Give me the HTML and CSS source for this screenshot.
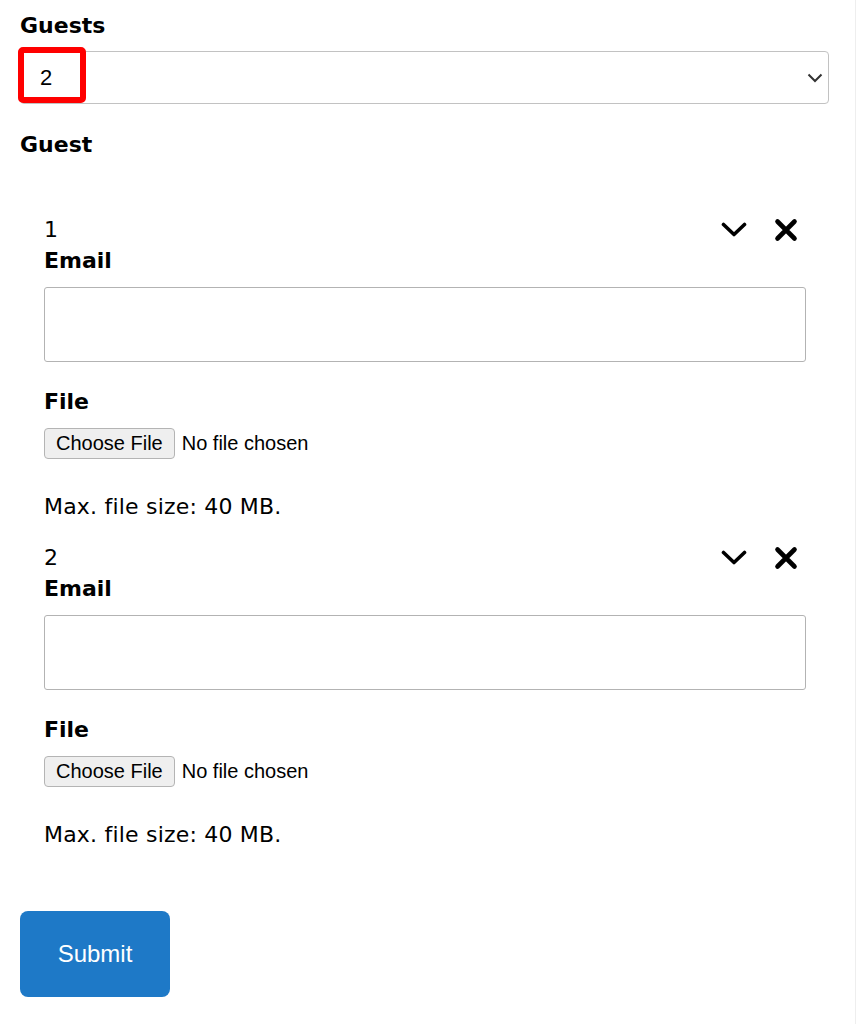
FILE: index.html
```html
<!DOCTYPE html>
<html>
  <head>
    <title>Guests</title>
    <link rel="stylesheet" href="styles.css">
  </head>
  <body>
    <div class="page">
      <form class="guest-form">
        <label class="label" for="guests">Guests</label>
        <div class="select-wrap">
          <select class="select" id="guests">
            <option>1</option>
            <option selected>2</option>
            <option>3</option>
          </select>
          <svg class="select-arrow" viewBox="0 0 16 10" width="16" height="10">
            <path d="M1.5 1.5 L8 8 L14.5 1.5" fill="none" stroke="#333" stroke-width="2" />
          </svg>
          <span class="highlight"></span>
        </div>

        <h3 class="label section-title">Guest</h3>

        <div class="guest-list">
          <div class="guest">
            <div class="guest-head">
              <span class="guest-num">1</span>
              <div class="guest-actions">
                <button type="button" class="icon-btn" title="Collapse">
                  <svg viewBox="0 0 26 16" width="26" height="16">
                    <path d="M2.5 2.5 L13 12.5 L23.5 2.5" fill="none" stroke="#000" stroke-width="3.6" stroke-linecap="round" stroke-linejoin="round" />
                  </svg>
                </button>
                <button type="button" class="icon-btn" title="Remove">
                  <svg viewBox="0 0 24 24" width="24" height="24">
                    <path d="M3.5 3.5 L20.5 20.5 M20.5 3.5 L3.5 20.5" fill="none" stroke="#000" stroke-width="4.6" stroke-linecap="round" />
                  </svg>
                </button>
              </div>
            </div>
            <label class="label">Email</label>
            <input class="text-input" type="email">
            <label class="label file-label">File</label>
            <input class="file-input" type="file">
            <p class="hint">Max. file size: 40 MB.</p>
          </div>

          <div class="guest">
            <div class="guest-head">
              <span class="guest-num">2</span>
              <div class="guest-actions">
                <button type="button" class="icon-btn" title="Collapse">
                  <svg viewBox="0 0 26 16" width="26" height="16">
                    <path d="M2.5 2.5 L13 12.5 L23.5 2.5" fill="none" stroke="#000" stroke-width="3.6" stroke-linecap="round" stroke-linejoin="round" />
                  </svg>
                </button>
                <button type="button" class="icon-btn" title="Remove">
                  <svg viewBox="0 0 24 24" width="24" height="24">
                    <path d="M3.5 3.5 L20.5 20.5 M20.5 3.5 L3.5 20.5" fill="none" stroke="#000" stroke-width="4.6" stroke-linecap="round" />
                  </svg>
                </button>
              </div>
            </div>
            <label class="label">Email</label>
            <input class="text-input" type="email">
            <label class="label file-label">File</label>
            <input class="file-input" type="file">
            <p class="hint">Max. file size: 40 MB.</p>
          </div>
        </div>

        <button type="submit" class="submit">Submit</button>
      </form>
    </div>
  </body>
</html>
```

FILE: styles.css
```css
* {
  box-sizing: border-box;
}
body {
  margin: 0;
  background: #fff;
  color: #000;
  font-family: "DejaVu Sans", Verdana, sans-serif;
}
.page {
  min-height: 100vh;
  width: 856px;
  border-right: 1px solid #eeeeee;
  padding: 13px 26px 40px 20px;
}
.guest-form {
  display: flex;
  flex-direction: column;
  align-items: stretch;
}
.label {
  display: block;
  margin: 0;
  font-size: 22px;
  line-height: 26px;
  font-weight: bold;
}
.select-wrap {
  position: relative;
  margin-top: 12px;
}
.select {
  display: block;
  width: 100%;
  height: 53px;
  padding: 0 19px;
  appearance: none;
  background: #fff;
  border: 1px solid #c2c2c2;
  border-radius: 4px;
  font-family: "Liberation Sans", Arial, sans-serif;
  font-size: 22px;
  color: #000;
}
.select-arrow {
  position: absolute;
  right: 6px;
  top: 22px;
  pointer-events: none;
}
.highlight {
  position: absolute;
  left: -2px;
  top: -4px;
  width: 68px;
  height: 56px;
  border: 6px solid #ff0000;
  border-radius: 5px;
  pointer-events: none;
}
.section-title {
  margin-top: 28px;
}
.guest-list {
  display: flex;
  flex-direction: column;
  gap: 23px;
  padding: 57px 23px 0 24px;
}
.guest {
  display: flex;
  flex-direction: column;
}
.guest-head {
  display: flex;
  justify-content: space-between;
  align-items: center;
  height: 30px;
  margin-bottom: 3px;
}
.guest-num {
  font-size: 22px;
  line-height: 30px;
}
.guest-actions {
  display: flex;
  gap: 16px;
  margin-right: 2px;
}
.icon-btn {
  width: 36px;
  height: 30px;
  padding: 0;
  border: none;
  background: none;
  display: flex;
  align-items: center;
  justify-content: center;
  cursor: pointer;
}
.text-input {
  display: block;
  width: 100%;
  height: 75px;
  margin-top: 13px;
  border: 1px solid #b3b3b3;
  border-radius: 3px;
  background: #fff;
}
.file-label {
  margin-top: 27px;
}
.file-input {
  margin-top: 13px;
  font-family: "Liberation Sans", Arial, sans-serif;
  font-size: 20px;
  color: #000;
}
.file-input::file-selector-button {
  font: inherit;
  color: #000;
  height: 31px;
  padding: 0 11px;
  margin-right: 7px;
  background: #efefef;
  border: 1px solid #b4b4b4;
  border-radius: 4px;
}
.hint {
  margin: 35px 0 0;
  font-size: 22px;
  line-height: 26px;
  letter-spacing: 0.2px;
}
.submit {
  align-self: flex-start;
  margin-top: 63px;
  width: 150px;
  height: 86px;
  border: none;
  border-radius: 8px;
  background: #1e79c7;
  color: #fff;
  font-family: "Liberation Sans", Arial, sans-serif;
  font-size: 24px;
  cursor: pointer;
}
```
